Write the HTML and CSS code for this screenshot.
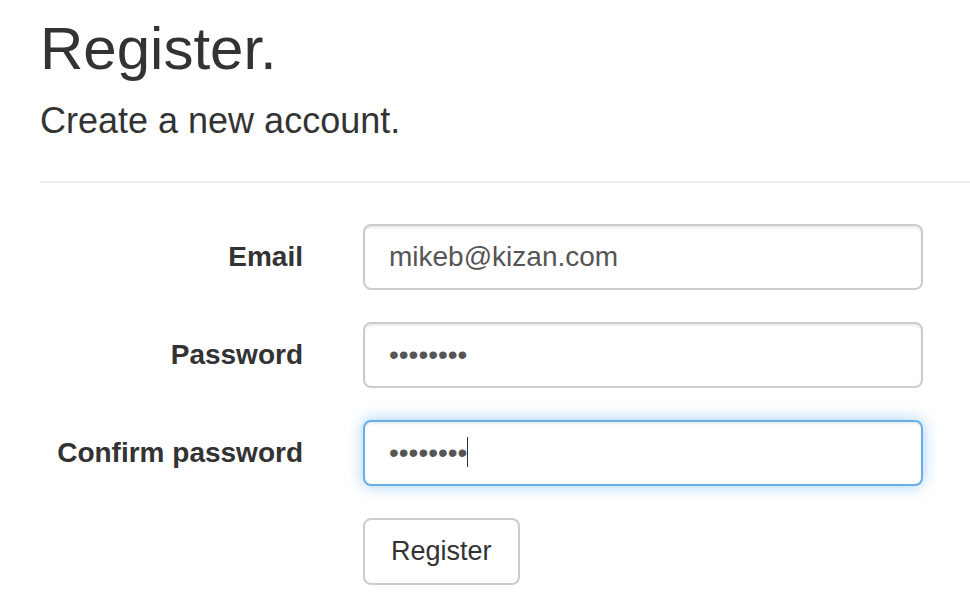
FILE: index.html
```html
<!DOCTYPE html>
<html lang="en">
<head>
<meta charset="utf-8">
<title>Register</title>
<link rel="stylesheet" href="styles.css">
</head>
<body>
<div class="page">
  <h2 class="title">Register.</h2>
  <h4 class="subtitle">Create a new account.</h4>
  <hr class="divider">
  <form class="form">
    <div class="row">
      <label class="label" for="email">Email</label>
      <div class="field"><input class="input" id="email" type="text" value="mikeb@kizan.com"></div>
    </div>
    <div class="row">
      <label class="label" for="pw">Password</label>
      <div class="field"><input class="input" id="pw" type="password" value="12345678"></div>
    </div>
    <div class="row">
      <label class="label" for="pw2">Confirm password</label>
      <div class="field field-caret"><input class="input input-focus" id="pw2" type="password" value="12345678"><span class="caret"></span></div>
    </div>
    <div class="row">
      <div class="label"></div>
      <div class="field"><button class="btn" type="button">Register</button></div>
    </div>
  </form>
</div>
</body>
</html>
```
FILE: styles.css
```css
html, body {
  margin: 0;
  padding: 0;
  background: #fff;
}
body {
  font-family: "Liberation Sans", Arial, sans-serif;
  color: #333;
  overflow: hidden;
}
.page {
  padding: 16px 0 0 40px;
}
.title {
  margin: 0;
  font-size: 60px;
  line-height: 66px;
  font-weight: 400;
}
.subtitle {
  margin: 19px 0 0;
  font-size: 36px;
  line-height: 40px;
  font-weight: 400;
}
.divider {
  margin: 40px 0 0;
  height: 0;
  border: 0;
  border-top: 2px solid #eee;
}
.form {
  display: flex;
  flex-direction: column;
  gap: 32px;
  padding-top: 41px;
}
.row {
  display: flex;
  align-items: center;
  gap: 60px;
}
.label {
  width: 263px;
  flex: none;
  text-align: right;
  font-size: 28px;
  font-weight: 700;
  line-height: 1.4;
}
.field {
  width: 560px;
  flex: none;
}
.field-caret {
  position: relative;
}
.input {
  display: block;
  box-sizing: border-box;
  width: 100%;
  height: 66px;
  padding: 0 24px;
  font-family: "Liberation Sans", Arial, sans-serif;
  font-size: 28px;
  color: #555;
  background: #fff;
  border: 2px solid #ccc;
  border-radius: 8px;
  box-shadow: inset 0 2px 2px rgba(0, 0, 0, .075);
  outline: none;
}
.input-focus {
  border-color: #66afe9;
  box-shadow: inset 0 2px 2px rgba(0, 0, 0, .075), 0 0 16px rgba(102, 175, 233, .6);
}
.caret {
  position: absolute;
  left: 104px;
  top: 17px;
  width: 1px;
  height: 30px;
  background: #333;
}
.btn {
  box-sizing: border-box;
  height: 67px;
  padding: 0 26px;
  font-family: "Liberation Sans", Arial, sans-serif;
  font-size: 27px;
  color: #333;
  background: #fff;
  border: 2px solid #ccc;
  border-radius: 8px;
  cursor: pointer;
}
```
